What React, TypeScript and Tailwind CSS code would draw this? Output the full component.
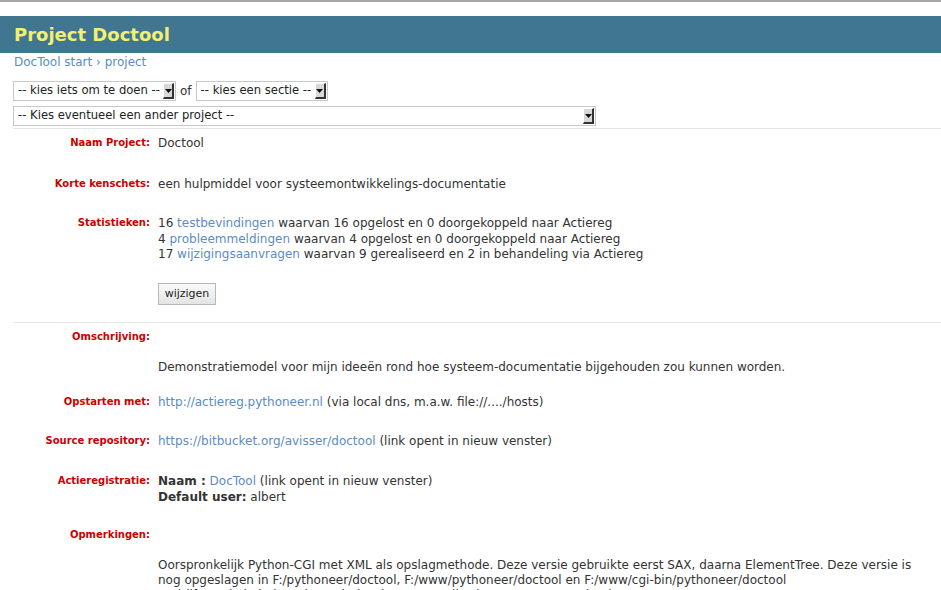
import React from "react";

const Select = ({ text, w }: { text: string; w: string }) => (
  <div className={`flex h-[20px] items-stretch border border-[#c8c8c8] bg-white ${w}`}>
    <div className="flex flex-1 items-center overflow-hidden whitespace-nowrap pl-[4px] text-[11.6px] text-[#222]">{text}</div>
    <div className="my-[1px] mr-[1px] flex w-[11px] items-center justify-center border-r-[2px] border-b-[2px] border-t border-l border-t-white border-l-white border-r-[#333] border-b-[#333] bg-[#d8d8d8]">
      <svg width="7" height="4" viewBox="0 0 7 4"><path d="M0 0h7L3.5 4z" fill="#111" /></svg>
    </div>
  </div>
);

const Row = ({ label, children, cls = "" }: { label: string; children?: React.ReactNode; cls?: string }) => (
  <div className={`flex ${cls}`}>
    <div className="w-[158px] shrink-0 pr-[8px] text-right text-[10px] font-bold leading-[16px] text-[#cc0000]">{label}</div>
    <div className="flex-1 pr-[20px] text-[12px] leading-[16px] text-[#333]">{children}</div>
  </div>
);

const A = ({ children }: { children: React.ReactNode }) => <span className="text-[#5b8cc4]">{children}</span>;

export default function App() {
  return (
    <div className="h-[590px] w-[941px] overflow-hidden bg-white" style={{ fontFamily: '"DejaVu Sans", Verdana, sans-serif' }}>
      <div className="h-[2px] bg-[#a8a8a8]" />
      <div className="mt-[14px] flex h-[37px] items-center bg-[#407690] pl-[14px]">
        <span className="text-[18px] font-bold text-[#f2ef72]">Project Doctool</span>
      </div>
      <div className="pl-[14px] pt-[1px] text-[12px] leading-[16px] text-[#5b8cc4]">DocTool start › project</div>
      <div className="mt-[11px] flex items-center pl-[13px]">
        <Select text="-- kies iets om te doen --" w="w-[163px]" />
        <span className="px-[4px] text-[12px] text-[#333]">of</span>
        <Select text="-- kies een sectie --" w="w-[132px]" />
      </div>
      <div className="mt-[5px] pl-[13px]">
        <Select text="-- Kies eventueel een ander project --" w="w-[583px]" />
      </div>
      <div className="ml-[13px] mt-[2px] h-[1px] bg-[#e6e6e6]" />

      <Row label="Naam Project:" cls="mt-[6px]">Doctool</Row>
      <Row label="Korte kenschets:" cls="mt-[25px]">een hulpmiddel voor systeemontwikkelings-documentatie</Row>
      <Row label="Statistieken:" cls="mt-[23px]">
        <div>16 <A>testbevindingen</A> waarvan 16 opgelost en 0 doorgekoppeld naar Actiereg</div>
        <div className="-mt-[0.5px]">4 <A>probleemmeldingen</A> waarvan 4 opgelost en 0 doorgekoppeld naar Actiereg</div>
        <div className="-mt-[0.5px]">17 <A>wijzigingsaanvragen</A> waarvan 9 gerealiseerd en 2 in behandeling via Actiereg</div>
        <div className="mt-[21px] flex">
          <button className="flex h-[22px] w-[58px] items-center justify-center border border-[#b8b8b8] bg-gradient-to-b from-[#fafafa] to-[#e4e4e4] text-[11px] text-[#222]">wijzigen</button>
        </div>
      </Row>
      <div className="ml-[13px] mt-[17px] h-[1px] bg-[#e6e6e6]" />

      <Row label="Omschrijving:" cls="mt-[6px]" />
      <Row label="" cls="mt-[14px]">Demonstratiemodel voor mijn ideeën rond hoe systeem-documentatie bijgehouden zou kunnen worden.</Row>
      <Row label="Opstarten met:" cls="mt-[19px]"><A>http://actiereg.pythoneer.nl</A> (via local dns, m.a.w. file://..../hosts)</Row>
      <Row label="Source repository:" cls="mt-[23px]"><A>https://bitbucket.org/avisser/doctool</A> (link opent in nieuw venster)</Row>
      <Row label="Actieregistratie:" cls="mt-[24px]">
        <div><b>Naam :</b> <A>DocTool</A> (link opent in nieuw venster)</div>
        <div><b>Default user:</b> albert</div>
      </Row>
      <Row label="Opmerkingen:" cls="mt-[22px]" />
      <Row label="" cls="mt-[15px]">
        <div className="whitespace-nowrap leading-[15px]">
          Oorspronkelijk Python-CGI met XML als opslagmethode. Deze versie gebruikte eerst SAX, daarna ElementTree. Deze versie is<br />
          nog opgeslagen in F:/pythoneer/doctool, F:/www/pythoneer/doctool en F:/www/cgi-bin/pythoneer/doctool<br />
          Bedrijfsversie in beheer bewerkt in Django en Sqlite (omgezet naar Python)
        </div>
      </Row>
    </div>
  );
}
